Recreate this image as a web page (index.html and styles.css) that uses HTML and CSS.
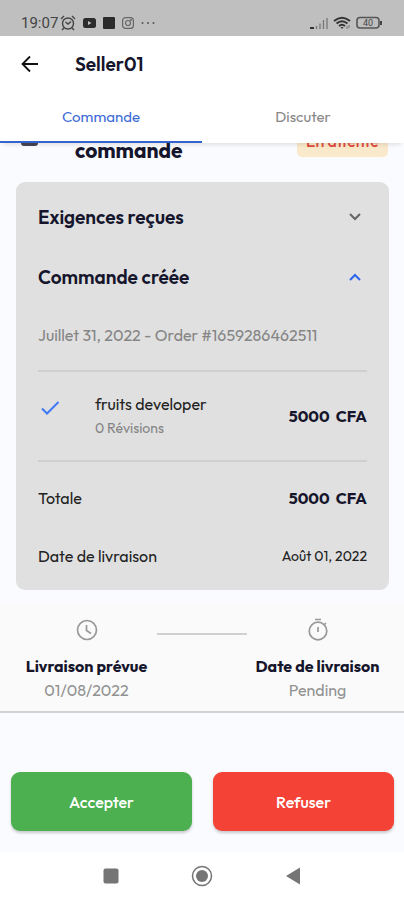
FILE: index.html
```html
<!DOCTYPE html>
<html lang="fr">
<head>
<meta charset="utf-8">
<meta name="viewport" content="width=device-width, initial-scale=1">
<title>Seller01</title>
<link rel="stylesheet" href="styles.css">
</head>
<body>
<div class="status">
  <div class="status-group">
    <span class="clock">19:07</span>
    <svg width="16" height="16" viewBox="0 0 16 16" fill="none" stroke="#444" stroke-width="1.4"><circle cx="8" cy="8.500" r="5.500"/><path d="M5.500 7 8 9l3-2.500M1 4l3-3M12 1l3 3M4 13l-2 2M12 13l2 2"/></svg>
    <svg width="13" height="16" viewBox="0 0 13 16"><rect y="3" width="13" height="10" rx="2.500" fill="#2b2b2b"/><path d="M5 6v4l3.500-2z" fill="#bfbfbf"/></svg>
    <svg width="12" height="16" viewBox="0 0 12 16"><rect y="2" width="12" height="12" rx="1" fill="#2b2b2b"/></svg>
    <svg width="12" height="16" viewBox="0 0 12 16" fill="none" stroke="#666" stroke-width="1.200"><rect x=".6" y="2.600" width="10.800" height="10.800" rx="3"/><circle cx="6" cy="8" r="2.500"/><circle cx="9" cy="5" r=".4"/></svg>
    <svg width="14" height="16" viewBox="0 0 14 16" fill="#555"><circle cx="1.500" cy="8" r="1"/><circle cx="7" cy="8" r="1"/><circle cx="12.500" cy="8" r="1"/></svg>
  </div>
  <div class="status-group signals">
    <svg width="18" height="16" viewBox="0 0 18 16" fill="none" stroke="#777" stroke-width="1.300"><path d="M0 13h4" stroke="#333" stroke-width="2"/><path d="M6.500 14v-3M10 14V8.500M13.500 14V5M17 14V3"/></svg>
    <svg width="18" height="16" viewBox="0 0 18 16" fill="none" stroke="#333" stroke-width="2"><path d="M1 6q8-6.500 16 0M3.500 8.500q5.500-4.500 11 0M6 11q3-2.500 6 0"/><path d="m7.500 12 1.500 2 1.500-2z" fill="#333" stroke="none"/><path d="M14 11v3M16 10v3" stroke="#777" stroke-width="1"/></svg>
    <svg width="27" height="16" viewBox="0 0 27 16"><rect x="1" y="2.500" width="22" height="10.500" rx="3" fill="none" stroke="#555" stroke-width="1.600"/><path d="M24 6h2v4h-2z" fill="#444"/><text x="12" y="11" class="battery-text">40</text></svg>
  </div>
</div>
<header class="bar">
  <button class="back" aria-label="Retour"><svg width="18" height="18" viewBox="0 0 18 18" fill="none" stroke="#111" stroke-width="1.800"><path d="M17 9H2M9 1.500 1.500 9 9 16.500"/></svg></button>
  <h1>Seller01</h1>
</header>
<nav class="tabs">
  <a class="tab active" href="#commande">Commande</a>
  <a class="tab" href="#discuter">Discuter</a>
</nav>
<main id="commande">
  <div class="heading">
    <span class="heading-icon"></span>
    <h2>commande</h2>
    <div class="badge">En attente</div>
  </div>
  <section class="card">
    <button class="fold">Exigences reçues
      <svg width="12" height="8" viewBox="0 0 12 8" fill="none" stroke="#666" stroke-width="2"><path d="m1 1 5 5 5-5"/></svg></button>
    <button class="fold" aria-expanded="true">Commande créée
      <svg width="12" height="8" viewBox="0 0 12 8" fill="none" stroke="#2c66ef" stroke-width="2"><path d="m1 7 5-5 5 5"/></svg></button>
    <p class="order">Juillet 31, 2022 - Order #1659286462511</p>
    <div class="item">
      <svg class="check" width="20" height="16" viewBox="0 0 20 16" fill="none" stroke="#3f78f5" stroke-width="2"><path d="m2 8.500 5 5L18.500 2"/></svg>
      <div class="item-name"><p>fruits developer</p><small>0 Révisions</small></div>
      <strong>5000&nbsp; CFA</strong>
    </div>
    <div class="line total"><span>Totale</span><strong>5000&nbsp; CFA</strong></div>
    <div class="line"><span>Date de livraison</span><span class="date">Août 01, 2022</span></div>
  </section>
  <section class="timeline">
    <div class="step">
      <svg width="24" height="24" viewBox="0 0 24 24" fill="none" stroke="#999" stroke-width="1.700"><circle cx="12" cy="12" r="9.500"/><path d="M11.500 7v5.500l4.500 3"/></svg>
      <strong>Livraison prévue</strong><span>01/08/2022</span>
    </div>
    <div class="connector"></div>
    <div class="step">
      <svg width="24" height="24" viewBox="0 0 24 24" fill="none" stroke="#999" stroke-width="1.700"><circle cx="12" cy="13" r="8.800"/><path d="M9 1.500h6M12 9v5M18 7l2-2"/></svg>
      <strong>Date de livraison</strong><span>Pending</span>
    </div>
  </section>
  <div class="actions">
    <button class="accept">Accepter</button>
    <button class="refuse">Refuser</button>
  </div>
</main>
<footer class="system">
  <svg width="24" height="24" viewBox="0 0 24 24"><rect x="4.500" y="4.500" width="15" height="15" rx="2" fill="#757575"/></svg>
  <svg width="24" height="24" viewBox="0 0 24 24"><circle cx="12" cy="12" r="9.500" fill="none" stroke="#757575" stroke-width="1.500"/><circle cx="12" cy="12" r="6" fill="#757575"/></svg>
  <svg width="24" height="24" viewBox="0 0 24 24"><path d="M5 12 19 3.500v17z" fill="#757575"/></svg>
</footer>
</body>
</html>
```
FILE: styles.css
```css
* { box-sizing: border-box; }
body {
  margin: 0;
  min-height: 100vh;
  display: flex;
  flex-direction: column;
  background: #fafbff;
  color: #222;
  font: 16px/24px Outfit, Lato, sans-serif;
}
h1, h2, p { margin: 0; }
button { border: 0; padding: 0; background: none; font: inherit; color: inherit; }
svg { display: block; flex: none; }
strong { color: #15152c; font-weight: 700; }

.status {
  display: flex;
  justify-content: space-between;
  height: 36px;
  padding: 10px 21px 0 21px;
  background: #bfbfbf;
}
.status-group { display: flex; align-items: center; gap: 7px; height: 26px; }
.signals { gap: 5px; }
.clock { font: 15px/24px Roboto, sans-serif; color: #444; margin-right: -5px; }
.battery-text { font: 9px Roboto, sans-serif; fill: #444; text-anchor: middle; }

.bar {
  display: flex;
  align-items: center;
  gap: 36px;
  height: 56px;
  padding: 0 21px;
  background: #fff;
}
.bar h1 { font-size: 19px; font-weight: 600; color: #15152c; }

.tabs {
  position: relative;
  display: flex;
  background: #fff;
  box-shadow: 0 5px 4px -3px #0000001a;
}
.tab {
  flex: 1;
  height: 51px;
  border-bottom: 2px solid transparent;
  line-height: 50px;
  font-size: 15px;
  text-align: center;
  text-decoration: none;
  color: #888;
}
.tab.active { color: #3c6bd6; border-color: #3465cf; }

main { flex: 1; }
.heading {
  display: flex;
  height: 39px;
  padding: 0 16px 0 21px;
}
.heading-icon {
  width: 17px;
  height: 3px;
  margin-right: 37px;
  border-radius: 0 0 6px 6px;
  background: #444654;
}
.heading h2 { flex: 1; font-size: 21px; font-weight: 700; line-height: 15px; color: #15152c; }
.badge {
  display: flex;
  align-items: flex-end;
  width: 91px;
  height: 14px;
  padding: 0 9px 8px;
  border-radius: 0 0 5px 5px;
  background: #faeacb;
  color: #e34a3d;
  font-size: 16px;
  font-weight: 500;
  line-height: 16px;
  white-space: nowrap;
}

.card {
  margin: 0 15px 0 16px;
  padding: 5px 22px 12px;
  border-radius: 9px;
  background: #e0e0e0;
}
.fold {
  display: flex;
  align-items: center;
  justify-content: space-between;
  width: 100%;
  height: 60px;
  padding-right: 6px;
  font-size: 19px;
  font-weight: 600;
  color: #15152c;
}
.order {
  height: 65px;
  padding-top: 16px;
  border-bottom: 2px solid #cecfcf;
  color: #858585;
}
.item {
  display: flex;
  align-items: center;
  height: 90px;
  border-bottom: 2px solid #cecfcf;
}
.check { margin: 0 35px 16px 2px; }
.item-name { flex: 1; }
.item-name small { display: block; font-size: 14px; color: #858585; }
.line {
  display: flex;
  align-items: center;
  justify-content: space-between;
  height: 44px;
}
.total { height: 72px; }
.date { font-size: 14px; }

.timeline {
  display: grid;
  grid-template-columns: 1fr 90px 1fr;
  gap: 8px;
  margin-top: 13px;
  padding: 15px 24px 9px;
  background: #fafafa;
  border-bottom: 2px solid #d3d3d3;
}
.step {
  display: flex;
  flex-direction: column;
  align-items: center;
  color: #929292;
}
.step strong { margin-top: 12px; white-space: nowrap; }
.connector { height: 17px; border-bottom: 2px solid #d0d0d0; }

.actions {
  display: grid;
  grid-template-columns: 1fr 1fr;
  gap: 21px;
  padding: 59px 10px 20px 11px;
}
.actions button {
  height: 59px;
  border-radius: 9px;
  color: #fff;
  font-weight: 500;
  box-shadow: 0 2px 3px #00000033;
}
.actions .accept { background: #4caf50; }
.actions .refuse { background: #f44336; }

.system {
  display: flex;
  justify-content: center;
  gap: 67px;
  padding: 12px 0;
  background: #fff;
}
```
